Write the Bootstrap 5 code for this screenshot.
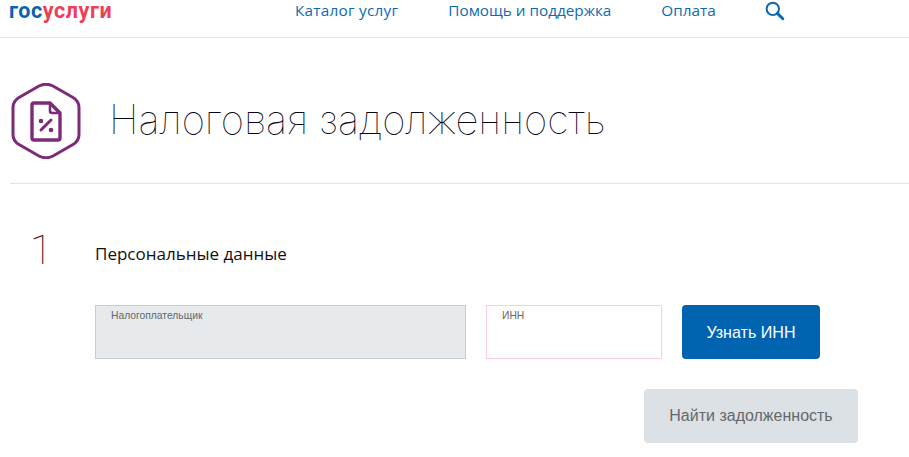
<!DOCTYPE html>
<html lang="ru"><head><meta charset="utf-8"><title>Налоговая задолженность</title>
<link rel="stylesheet" href="https://cdn.jsdelivr.net/npm/bootstrap@5.3.0/dist/css/bootstrap.min.css">
<style>
html,body{height:457px;overflow:hidden;background:#fff;font-family:"Liberation Sans",Arial,sans-serif}
.topbar{height:38px;border-bottom:1px solid #e3e8ee}
.brand{width:276px;padding-left:9px;font:700 21.500px/1 "Roboto",sans-serif;letter-spacing:.55px;margin-top:-15px;text-decoration:none}
.brand-a{color:#0a64b0}.brand-b{color:#ee3f58}
.toplink{color:#0f69b1;font:15.300px/1 "Open Sans","Noto Sans",sans-serif;text-decoration:none}
.toplink-wide{letter-spacing:.25px}
.toplinks{gap:50px;margin-top:-15px;margin-left:19px}
.searchic{margin-left:-1px}
.headrow{height:146px;margin:0 0 0 10px;border-bottom:1px solid #dfe3e6;gap:27px;padding-top:20px}
.pagetitle{font:100 40.100px/1 "Inter",sans-serif;color:#05051a;margin:0}
.steprow{margin-left:30px;margin-top:45px;height:50px}
.stepnum{width:65px;font:100 41px/1 "Roboto",sans-serif;color:#5c0d0d;margin-top:1px}
.steptitle{font:17px/1 "Open Sans",sans-serif;color:#111;margin:16px 0 0}
.formrow{margin:26px 0 0 95px;gap:20px}
.fieldbox{height:54px;padding:4px 15px;font-size:10.300px;line-height:12px;color:#666}
.fieldgrey{width:371px;background:#e7eaed;border:1px solid #c9cdd1;color:#5f6670}
.fieldpink{width:176px;background:#fff;border:1px solid #fbcfe0}
.btnmain{width:138px;height:54px;background:#0063b0;border:0;border-radius:4px;color:#fff;font-size:16.100px}
.btnmain:hover{background:#0063b0;color:#fff}
.findrow{margin-top:30px;padding-right:51px}
.btnfind{width:214px;height:54px;background:#dce1e5;border:0;border-radius:4px;color:#66686b;font-size:16px}
.btnfind:disabled{background:#dce1e5;color:#66686b;opacity:1}
</style></head><body>
<nav class="topbar d-flex align-items-center">
<a class="brand" href="#"><span class="brand-a">гос</span><span class="brand-b">услуги</span></a>
<div class="toplinks d-flex align-items-center">
<a class="toplink toplink-wide" href="#">Каталог услуг</a><a class="toplink" href="#">Помощь и поддержка</a><a class="toplink" href="#">Оплата</a>
<svg class="searchic" width="20" height="20" viewBox="0 0 22 22" fill="none" stroke="#0f69b1" aria-label="Поиск"><circle cx="8.6" cy="8.6" r="6.800" stroke-width="2.200"/><path d="M13.6 13.6l6 6" stroke-width="3.200" stroke-linecap="round"/></svg>
</div></nav>
<header class="headrow d-flex align-items-center">
<svg width="72" height="76" viewBox="0 0 72 76" fill="none" aria-hidden="true"><path d="M29 3q7-3.500 14 0l20 11.500q6 3.500 6 10v27q0 6.500-6 10L43 73q-7 3.500-14 0L9 61.500q-6-3.500-6-10v-27q0-6.500 6-10z" stroke="#7d2a78" stroke-width="3"/><path d="M24 20h16l10 10v25q0 2-2 2H24q-2 0-2-2V22q0-2 2-2z" stroke="#7d2a78" stroke-width="3.400" stroke-linejoin="round"/><path d="M40 20v8q0 2 2 2h8" stroke="#7d2a78" stroke-width="2.600"/><path d="M31 47l10-10" stroke="#7d2a78" stroke-width="3" stroke-linecap="round"/><circle cx="31" cy="38" r="2.300" fill="#7d2a78"/><circle cx="41" cy="47" r="2.300" fill="#7d2a78"/></svg>
<h1 class="pagetitle">Налоговая задолженность</h1>
</header>
<section class="steprow d-flex">
<div class="stepnum">1</div><h2 class="steptitle">Персональные данные</h2>
</section>
<form class="formrow d-flex">
<div class="fieldbox fieldgrey">Налогоплательщик</div>
<div class="fieldbox fieldpink">ИНН</div>
<button type="button" class="btn btnmain">Узнать ИНН</button>
</form>
<div class="findrow d-flex justify-content-end"><button type="button" class="btn btnfind" disabled>Найти задолженность</button></div>
</body></html>
